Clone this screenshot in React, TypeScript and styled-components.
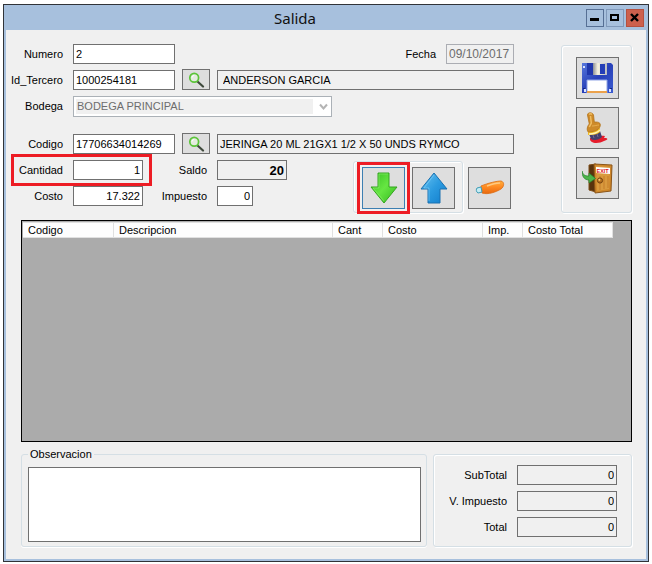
import React from "react";
import styled, { createGlobalStyle, css } from "styled-components";

const Global = createGlobalStyle`
  * { box-sizing: border-box; }
  body { margin: 0; background: #fff; }
  body, input, select, textarea, button {
    font-family: "Liberation Sans", Arial, sans-serif;
    font-size: 11px;
    color: #000;
  }
`;

const Window = styled.main`
  margin: 4px 3px 2px;
  border: 1px solid #303338;
  background: #a7c0dd;
  padding: 0 2px 2px;
`;

const TitleBar = styled.header`
  display: flex;
  align-items: center;
  gap: 2px;
  height: 25px;
  padding: 0 2px 0 0;
`;

const Title = styled.h1`
  flex: 1;
  margin: 0;
  text-align: center;
  font: 400 15px/24px "Noto Sans", "Open Sans", sans-serif;
  color: #111;
`;

const CaptionButton = styled.button<{ $kind?: "min" | "max" | "close" }>`
  display: grid;
  place-items: center;
  width: 18px;
  height: 18px;
  padding: 0;
  border: 1px solid ${(p) => (p.$kind === "close" ? "#b5503f" : p.$kind === "max" ? "#8099ba" : "#566f94")};
  background: ${(p) => (p.$kind === "close" ? "#cd604d" : "#a7c0dd")};
`;

const Client = styled.form`
  background: #f0f0f0;
  padding: 14px 14px 12px 15px;
`;

const Top = styled.div`
  display: flex;
  align-items: flex-start;
  gap: 47px;
  margin-left: -10px;
`;

const Fields = styled.div`
  flex: 1;
  min-width: 0;
  display: flex;
  flex-direction: column;
  gap: 6px;
`;

const Row = styled.div<{ $tall?: boolean }>`
  display: flex;
  align-items: flex-end;
  height: ${(p) => (p.$tall ? 32 : 20)}px;
`;

const Label = styled.label<{ $width?: number }>`
  width: ${(p) => (p.$width ? `${p.$width}px` : "auto")};
  margin-right: 10px;
  text-align: right;
  line-height: 20px;
  white-space: nowrap;
`;

const Input = styled.input<{ $width?: number; $num?: boolean; $bold?: boolean; $indent?: boolean }>`
  ${(p) => (p.$width ? css`width: ${p.$width}px;` : css`flex: 1; min-width: 0;`)}
  height: 20px;
  margin: 0;
  padding: 0 2px 0 ${(p) => (p.$indent ? 5 : 2)}px;
  border: 1px solid #707070;
  border-radius: 0;
  background: #fff;
  text-align: ${(p) => (p.$num ? "right" : "left")};
  font-weight: ${(p) => (p.$bold ? 700 : 400)};
  font-size: ${(p) => (p.$bold ? 13 : 11)}px;
  &:read-only { background: #f0f0f0; }
  &:disabled { border-color: #abadb3; color: #6d6d6d; font-size: 12px; }
`;

const FechaLabel = styled(Label)`
  margin-left: auto;
`;

const IconButton = styled.button<{ $small?: boolean; $focus?: boolean }>`
  display: grid;
  place-items: center;
  flex: none;
  width: ${(p) => (p.$small ? 28 : 43)}px;
  height: ${(p) => (p.$small ? 21 : 42)}px;
  margin: ${(p) => (p.$small ? "0 7px" : "0")};
  padding: 0;
  border: 1px solid ${(p) => (p.$focus ? "#3c7fb1" : "#707070")};
  background: #dedede;
`;

const Combo = styled.div`
  position: relative;
  width: 259px;
  height: 21px;
  margin-bottom: -1px;
  svg { position: absolute; right: 4px; top: 7px; pointer-events: none; }
`;

const Select = styled.select`
  appearance: none;
  width: 100%;
  height: 21px;
  padding: 0 20px 2px 3px;
  border: 1px solid #abb1b7;
  border-radius: 0;
  background: #fff linear-gradient(#f0f0f0, #f0f0f0) 2px 2px / calc(100% - 20px) calc(100% - 4px) no-repeat;
  &:disabled { color: #6d6d6d; opacity: 1; }
`;

const Marked = styled.div<{ $field?: boolean }>`
  position: relative;
  display: flex;
  &::after {
    content: "";
    position: absolute;
    inset: ${(p) => (p.$field ? "-6px -9px -6px 0" : "-5px")};
    border: 3px solid #ed1c24;
    pointer-events: none;
  }
`;

const Lower = styled.div`
  display: flex;
  align-items: flex-end;
  height: 53px;
`;

const Amounts = styled.div`
  display: grid;
  grid-template-columns: auto auto;
  column-gap: 10px;
  row-gap: 6px;
  align-self: flex-start;
`;

const Pair = styled.div`
  display: flex;
`;

const Group = styled.div`
  border: 1px solid #d5dfe5;
  border-radius: 3px;
  box-shadow: inset 1px 1px #fff, 1px 1px #fff;
`;

const ArrowGroup = styled(Group)`
  display: flex;
  gap: 7px;
  margin: 0 5px 0 66px;
  padding: 5px 7px 3px 8px;
`;

const EraseSlot = styled.div`
  padding-bottom: 4px;
`;

const SideGroup = styled(Group)`
  display: flex;
  flex-direction: column;
  gap: 8px;
  margin-top: 1px;
  padding: 11px 12px 13px 14px;
`;

const GridPane = styled.div`
  min-height: 222px;
  margin-top: 7px;
  padding: 1px;
  border: 1px solid #000;
  background: #ababab;
  overflow: hidden;
`;

const Table = styled.table`
  width: 590px;
  border-collapse: separate;
  border-spacing: 0;
  table-layout: fixed;
  th {
    height: 16px;
    padding: 0 0 0 5px;
    border: 1px solid #e0e0e0;
    border-width: 1px 1px 1px 0;
    background: #fdfdfd;
    text-align: left;
    font-weight: 400;
    line-height: 14px;
  }
`;

const Col = styled.col<{ $w: number }>`
  width: ${(p) => p.$w}px;
`;

const Bottom = styled.div`
  display: flex;
  align-items: flex-end;
  gap: 6px;
  margin-top: 5px;
`;

const Notes = styled.fieldset`
  flex: 1;
  min-width: 0;
  margin: 0;
  padding: 6px 5px 4px 6px;
  border: 1px solid #d5dfe5;
  border-radius: 3px;
  box-shadow: 0 1px #fff;
  legend { padding: 0 2px; line-height: 14px; }
`;

const TextArea = styled.textarea`
  display: block;
  width: 100%;
  height: 75px;
  border: 1px solid #707070;
  background: #fff;
  resize: none;
`;

const Totals = styled(Group)`
  display: flex;
  flex-direction: column;
  align-items: flex-end;
  gap: 6px;
  width: 199px;
  padding: 10px 14px 9px;
`;

const Magnifier = () => (
  <svg width="17" height="16" viewBox="0 0 17 16">
    <path d="M9.5 9.5l5.5 5" stroke="#3f4a3c" strokeWidth="2.2" strokeLinecap="round" />
    <circle cx="6.2" cy="5.8" r="4.4" fill="#e4ecdf" stroke="#5cc43a" strokeWidth="1.7" />
    <path d="M4 5.6a2.4 2.4 0 012.2-2.2" stroke="#fff" fill="none" />
  </svg>
);

const Floppy = () => (
  <svg width="31" height="30" viewBox="0 0 31 30">
    <defs>
      <linearGradient id="fb" x2="1" y2="1"><stop stopColor="#5878dc" /><stop offset=".5" stopColor="#2740b8" /><stop offset="1" stopColor="#3c5cd0" /></linearGradient>
      <linearGradient id="fm"><stop stopColor="#8c8f96" /><stop offset=".35" stopColor="#f7f3df" /><stop offset="1" stopColor="#b7bac0" /></linearGradient>
    </defs>
    <path d="M0 0h29l2 2v28H0z" fill="url(#fb)" />
    <path d="M5 0h7v12H5z" fill="#2037ac" />
    <path d="M11 0h14v12H11z" fill="url(#fm)" />
    <path d="M18 1h5v10h-5z" fill="#243eb7" />
    <path d="M5 17h20v13H5z" fill="#fff" stroke="#91a5e5" />
    <path d="M5 28h20v2H5z" fill="#eba24c" />
    <path d="M1 3h2v2H1zM2 26h2v3H2zM27 26h2v3h-2z" fill="#d9e2ff" />
    <path d="M1 25h2v1H1zM28 25h2v1h-2z" fill="#14267c" />
  </svg>
);

const Brush = () => (
  <svg width="24" height="32" viewBox="0 0 24 32">
    <path d="M4 26c5-1 9-3 15-2l-1 2c5 0 4 2 0 3-5 3-15 3-14-3z" fill="#e51c2b" />
    <path d="M3 22l11-3 2 6c-3 3-8 4-11 2z" fill="#45406c" />
    <path d="M7 23l1 3M11 22l1 3" stroke="#756b90" />
    <path d="M2 20l12-4v4c-3 3-8 3-12 3z" fill="#f2bd28" />
    <path d="M3 22c5 0 8-1 11-4" stroke="#fff7b8" strokeWidth="1.4" fill="none" />
    <path d="M1.5 3c0-3 5-3 6 0l.8 7c3 0 6 0 6 3 0 4-5 7-12 7-2-2-1-6 1-8z" fill="#cd8a29" stroke="#b4731b" strokeWidth=".8" />
    <path d="M3 2.5c1-1 2-1 3 0M4.5 4l.8 7-2 4" stroke="#efbd62" strokeWidth="1.5" fill="none" />
    <path d="M6 14c3 0 5-1 7-1" stroke="#e8af50" fill="none" />
  </svg>
);

const ExitDoor = () => (
  <svg width="31" height="31" viewBox="0 0 31 31">
    <path d="M7 2l7-1v28l-7-2z" fill="#59320d" stroke="#7d4c18" />
    <path d="M12 1l18 1-1 26-16 2z" fill="#ce872b" stroke="#8b5518" />
    <path d="M14 3l14 1-1 22-12 2z" fill="#d99a3e" />
    <path d="M18 13v14M22 13v13M26 13v12" stroke="#c57d29" />
    <path d="M14 4l14 1v6l-14-1z" fill="#fff" />
    <text x="14.5" y="10" fontFamily="Liberation Sans, sans-serif" fontWeight="700" fontSize="5.5" fill="#e01c27">EXIT</text>
    <circle cx="18" cy="17.5" r="2.6" fill="#b5701e" stroke="#754311" />
    <circle cx="17.4" cy="16.8" r="1" fill="#f9cf7e" />
    <path d="M0 8c1 4 3 5 7 5v-3l6.5 5.5L7 20v-3C2 17 0 13 0 8z" fill="#4cb54a" stroke="#277f2d" strokeWidth=".7" />
  </svg>
);

const Arrow = ({ up }: { up?: boolean }) => (
  <svg width="28" height="32" viewBox="0 0 28 32">
    <defs>
      <linearGradient id={up ? "ub" : "dg"} x2="1" y2="1">
        <stop stopColor={up ? "#6cc4f0" : "#36bf22"} />
        <stop offset=".5" stopColor={up ? "#2c9be0" : "#66e642"} />
        <stop offset="1" stopColor={up ? "#0f7ccb" : "#32b71e"} />
      </linearGradient>
    </defs>
    {up ? (
      <path d="M14 1l13 16h-7v14H8V17H1z" fill="url(#ub)" stroke="#1b71b0" />
    ) : (
      <path d="M8 1h11v14h8L14 31 1 15h7z" fill="url(#dg)" stroke="#35a520" />
    )}
    <path d={up ? "M14 3L4 16h5v13" : "M18 2H9v14H3l11 13"} fill="none" stroke={up ? "#80d0f7" : "#8def70"} strokeOpacity=".6" />
  </svg>
);

const Eraser = () => (
  <svg width="30" height="16" viewBox="0 0 30 16">
    <defs><linearGradient id="or" x2="0" y2="1"><stop stopColor="#ffb03e" /><stop offset=".45" stopColor="#ff8c24" /><stop offset="1" stopColor="#e8690f" /></linearGradient></defs>
    <path d="M6 6C13 3 22 1 26 1c4 1 3 6 0 8-5 3-13 6-19 4z" fill="url(#or)" stroke="#dc6c13" strokeWidth=".8" />
    <path d="M12 6c5-2 9-3 13-3" stroke="#ffc880" strokeWidth="1.4" fill="none" />
    <path d="M2 8l4-1 1 5-4 1c-2-1-2-4-1-5z" fill="#c5ebf2" stroke="#3f9db7" />
  </svg>
);

const columns: [string, number][] = [
  ["Codigo", 91],
  ["Descripcion", 219],
  ["Cant", 50],
  ["Costo", 100],
  ["Imp.", 40],
  ["Costo Total", 90],
];

const totals = [
  ["subtotal", "SubTotal"],
  ["vimpuesto", "V. Impuesto"],
  ["total", "Total"],
];

export default function App() {
  return (
    <>
      <Global />
      <Window>
        <TitleBar>
          <Title>Salida</Title>
          <CaptionButton type="button" aria-label="Minimizar" $kind="min">
            <svg width="10" height="10"><path d="M0 5h9v3H0z" /></svg>
          </CaptionButton>
          <CaptionButton type="button" aria-label="Maximizar" $kind="max">
            <svg width="10" height="10"><path d="M0 1h9v7H0zM2 3v3h5V3z" fillRule="evenodd" /></svg>
          </CaptionButton>
          <CaptionButton type="button" aria-label="Cerrar" $kind="close">
            <svg width="10" height="10"><path d="M1 1l7 7M8 1L1 8" stroke="#000" strokeWidth="2.4" /></svg>
          </CaptionButton>
        </TitleBar>
        <Client onSubmit={(e) => e.preventDefault()}>
          <Top>
            <Fields>
              <Row>
                <Label $width={52} htmlFor="numero">Numero</Label>
                <Input $width={102} id="numero" defaultValue="2" />
                <FechaLabel htmlFor="fecha">Fecha</FechaLabel>
                <Input $width={68} id="fecha" defaultValue="09/10/2017" readOnly disabled />
              </Row>
              <Row>
                <Label $width={52} htmlFor="tercero">Id_Tercero</Label>
                <Input $width={102} id="tercero" defaultValue="1000254181" />
                <IconButton type="button" $small aria-label="Buscar tercero"><Magnifier /></IconButton>
                <Input $indent aria-label="Nombre del tercero" defaultValue="ANDERSON GARCIA" readOnly />
              </Row>
              <Row>
                <Label $width={52} htmlFor="bodega">Bodega</Label>
                <Combo>
                  <Select id="bodega" disabled><option>BODEGA PRINCIPAL</option></Select>
                  <svg width="9" height="8"><path d="M1 1.5l3.5 4 3.5-4" fill="none" stroke="#b4b4b4" strokeWidth="2" /></svg>
                </Combo>
              </Row>
              <Row $tall>
                <Label $width={52} htmlFor="codigo">Codigo</Label>
                <Input $width={102} id="codigo" defaultValue="17706634014269" />
                <IconButton type="button" $small aria-label="Buscar codigo"><Magnifier /></IconButton>
                <Input aria-label="Descripcion del producto" defaultValue="JERINGA 20 ML 21GX1 1/2 X 50 UNDS RYMCO" readOnly />
              </Row>
              <Lower>
                <Amounts>
                  <Marked $field>
                    <Label $width={52} htmlFor="cantidad">Cantidad</Label>
                    <Input $width={70} $num id="cantidad" defaultValue="1" />
                  </Marked>
                  <Pair>
                    <Label $width={54} htmlFor="saldo">Saldo</Label>
                    <Input $width={70} $num $bold id="saldo" defaultValue="20" readOnly />
                  </Pair>
                  <Pair>
                    <Label $width={52} htmlFor="costo">Costo</Label>
                    <Input $width={70} $num id="costo" defaultValue="17.322" />
                  </Pair>
                  <Pair>
                    <Label $width={54} htmlFor="impuesto">Impuesto</Label>
                    <Input $width={36} $num id="impuesto" defaultValue="0" />
                  </Pair>
                </Amounts>
                <ArrowGroup>
                  <Marked><IconButton type="button" $focus aria-label="Agregar"><Arrow /></IconButton></Marked>
                  <IconButton type="button" aria-label="Quitar"><Arrow up /></IconButton>
                </ArrowGroup>
                <EraseSlot>
                  <IconButton type="button" aria-label="Borrar"><Eraser /></IconButton>
                </EraseSlot>
              </Lower>
            </Fields>
            <SideGroup>
              <IconButton type="button" aria-label="Guardar"><Floppy /></IconButton>
              <IconButton type="button" aria-label="Limpiar"><Brush /></IconButton>
              <IconButton type="button" aria-label="Salir"><ExitDoor /></IconButton>
            </SideGroup>
          </Top>
          <GridPane>
            <Table>
              <colgroup>{columns.map(([n, w]) => <Col key={n} $w={w} />)}</colgroup>
              <thead><tr>{columns.map(([n]) => <th key={n} scope="col">{n}</th>)}</tr></thead>
            </Table>
          </GridPane>
          <Bottom>
            <Notes>
              <legend><label htmlFor="observacion">Observacion</label></legend>
              <TextArea id="observacion" />
            </Notes>
            <Totals>
              {totals.map(([id, name]) => (
                <Pair key={id}>
                  <Label htmlFor={id}>{name}</Label>
                  <Input $width={100} $num id={id} defaultValue="0" readOnly />
                </Pair>
              ))}
            </Totals>
          </Bottom>
        </Client>
      </Window>
    </>
  );
}
